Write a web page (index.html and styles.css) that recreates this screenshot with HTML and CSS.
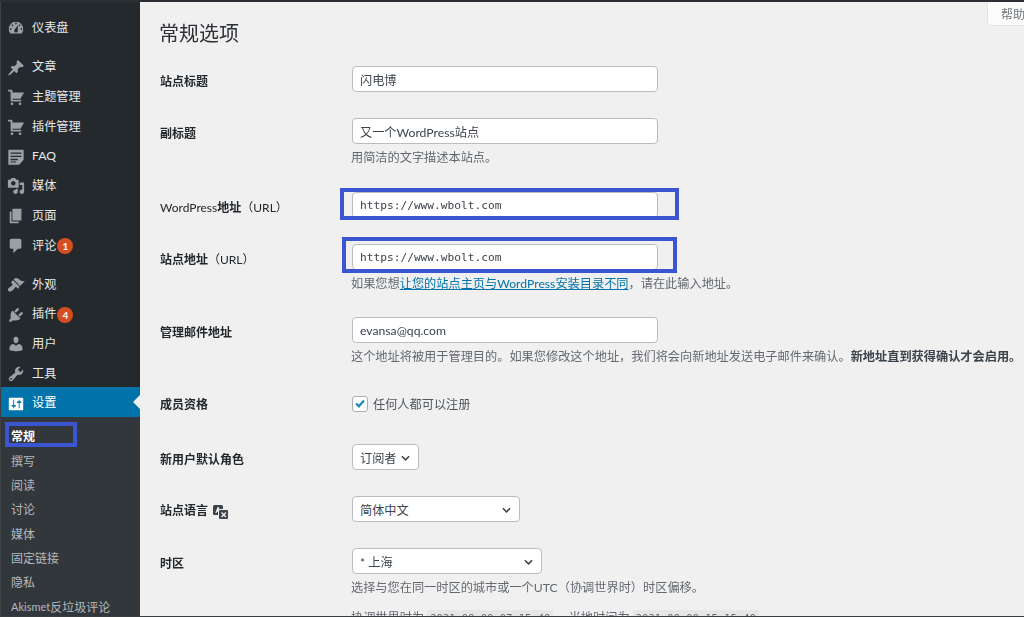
FILE: index.html
```html
<!DOCTYPE html>
<html lang="zh-CN">
<head>
<meta charset="utf-8">
<title>常规选项</title>
<link rel="stylesheet" href="styles.css">
</head>
<body>
<div class="frame">
  <aside class="sidebar">
    <nav class="menu">
      <a class="item"><svg class="ico" viewBox="0 0 20 20"><path fill-rule="evenodd" d="M3.76 16h12.48c1.1-1.37 1.76-3.11 1.76-5 0-4.42-3.58-8-8-8s-8 3.58-8 8c0 1.89.66 3.63 1.76 5zM10 4c.55 0 1 .45 1 1s-.45 1-1 1-1-.45-1-1 .45-1 1-1zM6 6c.55 0 1 .45 1 1s-.45 1-1 1-1-.45-1-1 .45-1 1-1zm8 0c.55 0 1 .45 1 1s-.45 1-1 1-1-.45-1-1 .45-1 1-1zm-5.37 5.55L12 7v6c0 1.1-.9 2-2 2s-2-.9-2-2c0-.57.24-1.08.63-1.45zM4 10c.55 0 1 .45 1 1s-.45 1-1 1-1-.45-1-1 .45-1 1-1zm12 0c.55 0 1 .45 1 1s-.45 1-1 1-1-.45-1-1 .45-1 1-1z"/></svg><span>仪表盘</span></a>
      <a class="item sep"><svg class="ico" viewBox="0 0 20 20"><path d="M10.44 3.02l1.82-1.82 6.36 6.35-1.83 1.82c-1.05-.68-2.48-.57-3.41.36l-.75.75c-.92.93-1.04 2.35-.35 3.41l-1.83 1.82-2.41-2.41-2.8 2.79c-.42.42-3.38 2.71-3.8 2.29s1.86-3.39 2.28-3.81l2.79-2.79L4.1 9.36l1.83-1.82c1.05.69 2.48.57 3.4-.36l.75-.75c.93-.92 1.05-2.35.36-3.41z"/></svg><span>文章</span></a>
      <a class="item"><svg class="ico" viewBox="0 0 20 20"><path d="M6 13h9c.55 0 1 .45 1 1s-.45 1-1 1H5c-.55 0-1-.45-1-1V4H2c-.55 0-1-.45-1-1s.45-1 1-1h3c.55 0 1 .45 1 1v2h13l-4 7H6v1zm-.5 3c.83 0 1.5.67 1.5 1.5S6.33 19 5.5 19 4 18.33 4 17.5 4.67 16 5.5 16zm9 0c.83 0 1.5.67 1.5 1.5s-.67 1.5-1.5 1.5-1.5-.67-1.5-1.5.67-1.5 1.5-1.5z"/></svg><span>主题管理</span></a>
      <a class="item"><svg class="ico" viewBox="0 0 20 20"><path d="M6 13h9c.55 0 1 .45 1 1s-.45 1-1 1H5c-.55 0-1-.45-1-1V4H2c-.55 0-1-.45-1-1s.45-1 1-1h3c.55 0 1 .45 1 1v2h13l-4 7H6v1zm-.5 3c.83 0 1.5.67 1.5 1.5S6.33 19 5.5 19 4 18.33 4 17.5 4.67 16 5.5 16zm9 0c.83 0 1.5.67 1.5 1.5s-.67 1.5-1.5 1.5-1.5-.67-1.5-1.5.67-1.5 1.5-1.5z"/></svg><span>插件管理</span></a>
      <a class="item"><svg class="ico" viewBox="0 0 20 20"><path fill-rule="evenodd" d="M1.5 2h17v11l-5 5.5h-12V2zM4 5v1.5h12V5H4zm0 3.5V10h12V8.5H4zM4 12v1.5h8V12H4zm0 3v1h6v-1H4z"/></svg><span>FAQ</span></a>
      <a class="item"><svg class="ico" viewBox="0 0 20 20"><path fill-rule="evenodd" d="M13 11V4c0-.55-.45-1-1-1h-1.67L9 1H5L3.67 3H2c-.55 0-1 .45-1 1v7c0 .55.45 1 1 1h10c.55 0 1-.45 1-1zM7 4.5c1.38 0 2.5 1.12 2.5 2.5S8.38 9.5 7 9.5 4.5 8.38 4.5 7 5.62 4.5 7 4.5zM14 6h5v10.5c0 1.38-1.12 2.5-2.5 2.5S14 17.88 14 16.5s1.12-2.5 2.5-2.5c.17 0 .34.02.5.05V9h-3V6zm-4 8.05V13h2v3.5c0 1.38-1.12 2.5-2.5 2.5S7 17.88 7 16.5 8.12 14 9.5 14c.17 0 .34.02.5.05z"/></svg><span>媒体</span></a>
      <a class="item"><svg class="ico" viewBox="0 0 20 20"><path d="M6 15V2h10v13H6zm-1 1h8v2H3V5h2v11z"/></svg><span>页面</span></a>
      <a class="item"><svg class="ico" viewBox="0 0 20 20"><path d="M5 2h9c1.1 0 2 .9 2 2v7c0 1.1-.9 2-2 2h-2l-5 5v-5H5c-1.1 0-2-.9-2-2V4c0-1.1.9-2 2-2z"/></svg><span>评论</span><b class="badge">1</b></a>
      <a class="item sep"><svg class="ico" viewBox="0 0 20 20"><path d="M14.48 11.06L7.41 3.99l1.5-1.5c.5-.56 2.3-.47 3.51.32 1.21.8 1.43 1.28 2.91 2.1 1.18.64 2.45 1.26 4.45.85zm-.71.71L6.7 4.7 4.93 6.47c-.39.39-.39 1.02 0 1.41l1.06 1.06c.39.39.39 1.03 0 1.42-.6.6-1.43 1.11-2.21 1.69-.35.26-.7.53-1.01.84C1.43 13.23.91 15.08 1.21 16c.1.31.25.56.46.75.19.21.44.36.75.46.93.3 2.78-.22 4.13-1.56.31-.31.58-.66.85-1.02.57-.78 1.08-1.61 1.69-2.21.39-.39 1.02-.39 1.41 0l1.06 1.06c.39.39 1.02.39 1.41 0z"/></svg><span>外观</span></a>
      <a class="item"><svg class="ico" viewBox="0 0 20 20"><path d="M13.11 4.36L9.87 7.6 8 5.73l3.24-3.24c.35-.34 1.05-.2 1.56.32.52.51.66 1.21.31 1.55zm-8 1.77l.91-1.12 9.01 9.01-1.19.84c-.71.71-2.63 1.16-3.82 1.16H6.14L4.9 17.26c-.59.59-1.54.59-2.12 0-.59-.58-.59-1.53 0-2.12l1.24-1.24v-3.88c0-1.13.4-3.19 1.09-3.89zm7.26 3.97l3.24-3.24c.34-.35 1.04-.21 1.55.31.52.51.66 1.21.31 1.55l-3.24 3.25z"/></svg><span>插件</span><b class="badge">4</b></a>
      <a class="item"><svg class="ico" viewBox="0 0 20 20"><path d="M10 9.25c-2.27 0-2.73-3.44-2.73-3.44C7 4.02 7.82 2 9.97 2c2.16 0 2.98 2.02 2.71 3.81 0 0-.41 3.44-2.68 3.44zm0 2.57L12.72 10c2.39 0 4.52 2.33 4.52 4.53v2.49s-3.65 1.13-7.24 1.13c-3.65 0-7.24-1.13-7.24-1.13v-2.49c0-2.25 1.94-4.48 4.47-4.48z"/></svg><span>用户</span></a>
      <a class="item"><svg class="ico" viewBox="0 0 20 20"><path fill-rule="evenodd" d="M16.68 9.77c-1.34 1.34-3.3 1.67-4.95.99l-5.41 6.52c-.99.99-2.59.99-3.58 0s-.99-2.59 0-3.57l6.52-5.42c-.68-1.65-.35-3.61.99-4.95 1.28-1.28 3.12-1.62 4.72-1.06l-2.89 2.89 2.82 2.82 2.86-2.87c.53 1.58.18 3.39-1.08 4.65zM3.81 16.21c.4.39 1.04.39 1.43 0 .4-.4.4-1.04 0-1.43-.39-.4-1.03-.4-1.43 0-.39.39-.39 1.03 0 1.43z"/></svg><span>工具</span></a>
      <a class="item active"><svg class="ico" viewBox="0 0 20 20"><path fill-rule="evenodd" d="M18 16V4c0-.55-.45-1-1-1H3c-.55 0-1 .45-1 1v12c0 .55.45 1 1 1h14c.55 0 1-.45 1-1zM8 11h1c.55 0 1 .45 1 1s-.45 1-1 1H8v1.5c0 .28-.22.5-.5.5s-.5-.22-.5-.5V13H6c-.55 0-1-.45-1-1s.45-1 1-1h1V5.5c0-.28.22-.5.5-.5s.5.22.5.5V11zm5-2h-1c-.55 0-1-.45-1-1s.45-1 1-1h1V5.5c0-.28.22-.5.5-.5s.5.22.5.5V7h1c.55 0 1 .45 1 1s-.45 1-1 1h-1v5.5c0 .28-.22.5-.5.5s-.5-.22-.5-.5V9z"/></svg><span>设置</span></a>
      <div class="submenu">
        <a class="sub current">常规</a>
        <a class="sub">撰写</a>
        <a class="sub">阅读</a>
        <a class="sub">讨论</a>
        <a class="sub">媒体</a>
        <a class="sub">固定链接</a>
        <a class="sub">隐私</a>
        <a class="sub"><span class="sub-lat">Akismet</span>反垃圾评论</a>
      </div>
    </nav>
  </aside>
  <main class="content">
    <h1 class="title">常规选项</h1>
    <div class="help">帮助</div>
    <form class="form">
      <div class="row">
        <label class="label">站点标题</label>
        <div class="field"><input class="input" type="text" value="闪电博"></div>
      </div>
      <div class="row">
        <label class="label">副标题</label>
        <div class="field"><input class="input" type="text" value="又一个WordPress站点"><p class="desc">用简洁的文字描述本站点。</p></div>
      </div>
      <div class="row">
        <label class="label"><span class="lat">WordPress</span>地址<span class="lat">（URL）</span></label>
        <div class="field"><input class="input code" type="text" value="https://www.wbolt.com"></div>
      </div>
      <div class="row">
        <label class="label">站点地址<span class="lat">（URL）</span></label>
        <div class="field"><input class="input code" type="text" value="https://www.wbolt.com"><p class="desc">如果您想<a class="link">让您的站点主页与WordPress安装目录不同</a>，请在此输入地址。</p></div>
      </div>
      <div class="row tight">
        <label class="label">管理邮件地址</label>
        <div class="field"><input class="input" type="text" value="evansa@qq.com"><p class="desc nowrap">这个地址将被用于管理目的。如果您修改这个地址，我们将会向新地址发送电子邮件来确认。<strong>新地址直到获得确认才会启用。</strong></p></div>
      </div>
      <div class="row check-row">
        <label class="label">成员资格</label>
        <div class="field check-field">
          <span class="checkbox"><svg viewBox="0 0 16 16"><path d="M2.6 8.4l1.9-1.9 2.2 2.2 4.9-5.6 1.9 1.7-6.7 7.7z"/></svg></span>
          <span>任何人都可以注册</span>
        </div>
      </div>
      <div class="row">
        <label class="label">新用户默认角色</label>
        <div class="field"><div class="select role"><span>订阅者</span><svg class="chev" viewBox="0 0 10 6"><path d="M1 1l4 4 4-4"/></svg></div></div>
      </div>
      <div class="row">
        <label class="label label-icon">站点语言 <svg class="lang" viewBox="0 0 16 15"><rect x="0" y="0" width="10" height="10" rx="1.5"/><path class="lang-a" d="M2.3 8L4.6 2h1l2.2 6H6.6L6.2 6.8H4L3.5 8z"/><rect class="lang-edge" x="5.5" y="4.5" width="10" height="10" rx="1.5"/><path class="lang-x" d="M8.5 7.5l4.5 4.5M13 7.5l-4.5 4.5"/></svg></label>
        <div class="field"><div class="select lang-select"><span>简体中文</span><svg class="chev" viewBox="0 0 10 6"><path d="M1 1l4 4 4-4"/></svg></div></div>
      </div>
      <div class="row">
        <label class="label">时区</label>
        <div class="field">
          <div class="select tz"><span>* 上海</span><svg class="chev" viewBox="0 0 10 6"><path d="M1 1l4 4 4-4"/></svg></div>
          <p class="desc">选择与您在同一时区的城市或一个UTC（协调世界时）时区偏移。</p>
          <p class="desc times">协调世界时为 <code class="stamp">2021-09-09 07:15:40</code> 。当地时间为 <code class="stamp">2021-09-09 15:15:40</code></p>
        </div>
      </div>
    </form>
  </main>
  <div class="mark mark-url"></div>
  <div class="mark mark-site"></div>
  <div class="mark mark-sub"></div>
</div>
</body>
</html>
```
FILE: styles.css
```css
* { box-sizing: border-box; }
html, body { margin: 0; height: 617px; overflow: hidden; }
body {
  font-family: Lato, "Noto Sans CJK SC", "Noto Sans", sans-serif;
  font-size: 12.2px;
  color: #3c434a;
  background: #f0f0f0;
}
.frame {
  position: relative;
  display: flex;
  height: 617px;
  border-top: 2px solid #2b2f33;
  border-bottom: 1px solid #3a3d40;
  overflow: hidden;
  filter: blur(0.3px);
}

/* Sidebar */
.sidebar {
  flex: 0 0 140px;
  background: #24292d;
  border-left: 1px solid #3c4146;
  color: #e6e8ea;
}
.menu { display: flex; flex-direction: column; padding-top: 10px; }
.item {
  display: flex;
  align-items: center;
  height: 29.7px;
  flex: none;
  position: relative;
  padding: 3px 0 0 6px;
  line-height: 1;
}
.item span { margin-left: 7px; }
.sep { margin-top: 9.5px; }
.ico { width: 18px; height: 18px; flex: none; fill: #9aa0a5; }
.badge {
  display: inline-flex;
  align-items: center;
  justify-content: center;
  width: 16px;
  height: 16px;
  margin-left: 1px;
  border-radius: 50%;
  background: #d54e21;
  color: #fff;
  font-size: 10px;
  font-weight: 700;
}
.active { background: #0073aa; color: #fff; }
.active .ico { fill: #fff; }
.active::after {
  content: "";
  position: absolute;
  right: 0;
  top: 50%;
  margin-top: -7px;
  border: 7px solid transparent;
  border-right-color: #f0f0f0;
  border-left-width: 0;
}
.submenu {
  display: flex;
  flex-direction: column;
  padding-top: 6.5px;
  background: #32373c;
  flex: 1 0 auto;
  height: 210px;
}
.sub {
  display: flex;
  align-items: center;
  flex: none;
  height: 24.4px;
  padding-left: 10px;
  color: #b4b9be;
  font-size: 12px;
  white-space: nowrap;
}
.sub-lat { font-size: 11px; }
.current { color: #fff; font-weight: 700; }

/* Content */
.content { position: relative; flex: 1; min-width: 0; padding-left: 20px; }
.title {
  margin: 0 0 0 -1px;
  height: 64px;
  padding-top: 17px;
  font-size: 20px;
  line-height: 28px;
  font-weight: 400;
  color: #2c3035;
}
.help {
  position: absolute;
  top: 0;
  right: 0;
  width: 36px;
  height: 23px;
  padding: 3px 0 0 13px;
  background: #fbfbfb;
  border-radius: 0 0 0 4px;
  box-shadow: 0 0 0 1px #e4e4e4;
  color: #72777c;
  font-size: 12px;
  white-space: nowrap;
  overflow: hidden;
}
.form { display: flex; flex-direction: column; gap: 26px; }
.row { display: flex; align-items: flex-start; }
.tight { margin-top: -1px; }
.label {
  flex: 0 0 192px;
  height: 26px;
  line-height: 31px;
  font-weight: 700;
  font-size: 12px;
  color: #23282d;
  white-space: nowrap;
}
.lat { font-weight: 400; }
.label-icon { display: flex; align-items: center; gap: 5px; line-height: 1; padding-top: 3px; }
.field { flex: 1; min-width: 0; }
.input {
  display: block;
  width: 306px;
  height: 26px;
  padding: 1px 7px 0;
  border: 1px solid #b9bcc0;
  border-radius: 4px;
  background: #fff;
  color: #3c434a;
  font: inherit;
  outline: none;
}
.code { font-family: "DejaVu Sans Mono", "Liberation Mono", monospace; font-size: 11.2px; padding-top: 0; }
.desc {
  margin: 0 0 0 -1px;
  height: 22px;
  line-height: 28px;
  color: #646970;
  font-size: 12.2px;
  white-space: nowrap;
}
.nowrap strong { color: #3c434a; font-weight: 700; }
.link { color: #0073aa; text-decoration: underline; }
.check-row { height: 27px; }
.check-row .label { line-height: 28px; }
.check-field { display: flex; align-items: center; height: 24px; margin-top: 1px; }
.check-field > span:last-child { color: #50575e; margin-left: 5px; }
.checkbox {
  width: 16px;
  height: 16px;
  border: 1px solid #a9adb2;
  border-radius: 3px;
  background: #fff;
  flex: none;
  display: flex;
}
.checkbox svg { width: 14px; height: 14px; fill: #1e8cbe; }
.select {
  display: flex;
  align-items: center;
  justify-content: space-between;
  height: 26px;
  padding: 1px 8px 0 7px;
  border: 1px solid #b9bcc0;
  border-radius: 4px;
  background: #fff;
  color: #3c434a;
}
.role { width: 67px; }
.lang-select { width: 168px; }
.tz { width: 190px; }
.chev { width: 9px; height: 6px; fill: none; stroke: #3c434a; stroke-width: 1.7; }
.times { margin-top: 12px; height: 22px; line-height: 20px; }
.stamp {
  background: #e6e6e6;
  padding: 2px 3px;
  font-family: "DejaVu Sans Mono", monospace;
  font-size: 10.5px;
}
.lang { width: 16px; height: 15px; margin-top: 3px; fill: #3c434a; }
.lang-a { fill: #f0f0f0; }
.lang-edge { stroke: #f0f0f0; stroke-width: 1; }
.lang-x { stroke: #f0f0f0; stroke-width: 1.4; fill: none; }

/* Annotation rectangles drawn over the screenshot */
.mark { position: absolute; border: 4px solid #3b55d0; }
.mark-url { left: 340px; top: 186px; width: 339px; height: 32px; }
.mark-site { left: 342px; top: 235px; width: 335px; height: 36px; }
.mark-sub { left: 5px; top: 420px; width: 72px; height: 25px; }
```
